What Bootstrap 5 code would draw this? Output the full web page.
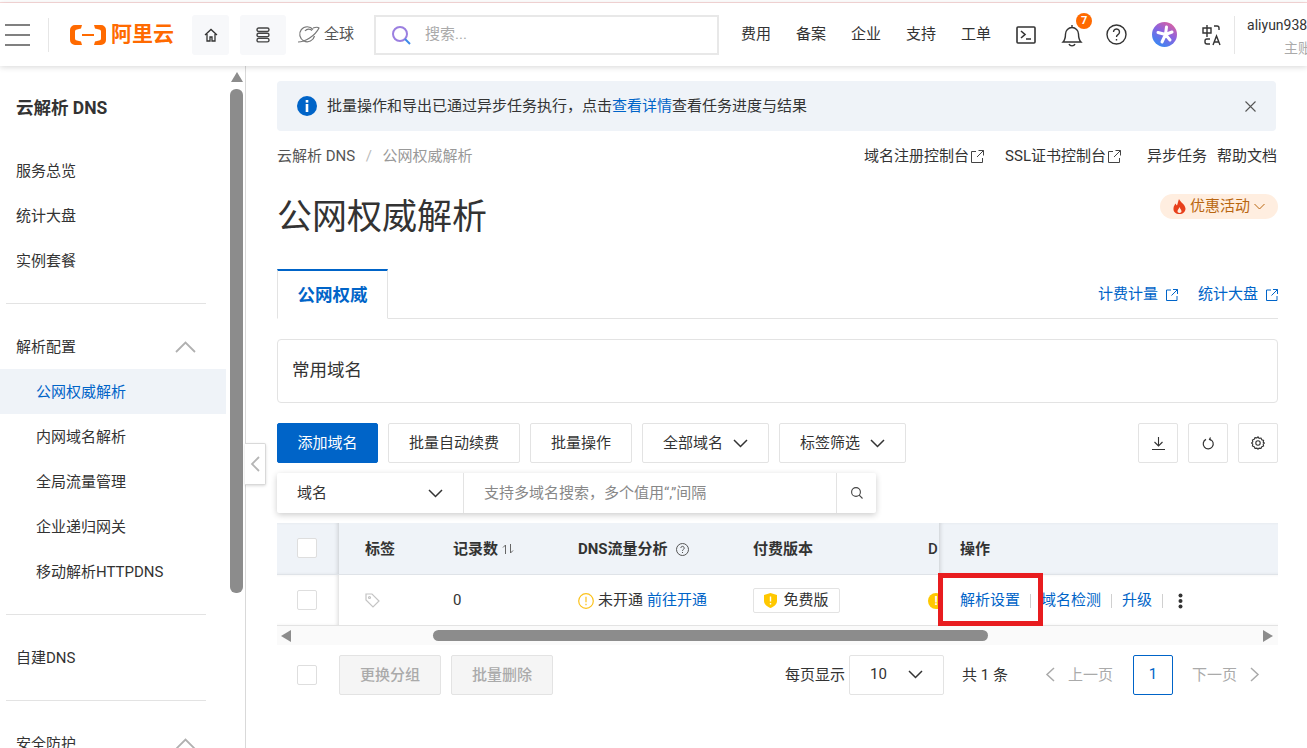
<!DOCTYPE html>
<html lang="zh-CN">
<head>
    <meta charset="UTF-8">
    <title>公网权威解析</title>
    <link href="https://cdn.jsdelivr.net/npm/bootstrap@5.3.0/dist/css/bootstrap.min.css" rel="stylesheet">
    <style>
        html, body { height: 748px; overflow: hidden; }
        body { font-family: Roboto, "Noto Sans CJK SC", sans-serif; font-size: 15px; color: #333; background: #fff; }
        svg { display: block; flex: none; }
        a { text-decoration: none; color: #0064c8; }

        .top-line { height: 3px; background: #fff; border-bottom: 1px solid #fbdcdc; }
        .top-bar { height: 63px; background: #fff; box-shadow: 0 1px 6px rgba(0,0,0,.16); position: relative; z-index: 5; overflow: hidden; white-space: nowrap; }
        .top-bar > * { flex: none; }
        .menu-btn { width: 44px; height: 34px; margin-left: 5px; border-right: 1px solid #e6e6e6; }
        .logo { margin-left: 21px; width: 103px; color: #ff6a00; font-size: 21px; font-weight: 700; line-height: 1; gap: 5px; }
        .square-btn { height: 40px; background: #f7f8fa; border-radius: 3px; }
        .search-box { width: 345px; height: 40px; margin-left: 20px; border: 2px solid #e8e8e8; padding-left: 15px; gap: 14px; color: #aaa; }
        .top-nav { margin-left: 22px; gap: 25px; }
        .bell-wrap { margin-right: -2px; }
        .user-box { margin-left: 12px; padding-left: 12px; height: 38px; width: 73px; border-left: 1px solid #e6e6e6; font-size: 14px; line-height: 20px; }
        .user-name { margin-top: -1px; }
        .user-sub { color: #aaa; margin-left: 37px; margin-top: 3px; }
        .bell-badge { position: absolute; top: -10px; right: -9px; width: 16px; height: 16px; border-radius: 50%; background: #ff6a00; color: #fff; font-size: 11px; font-weight: 700; line-height: 16px; text-align: center; }

        .page-body { height: 682px; position: relative; }
        .side-wrap { width: 246px; flex: none; border-right: 1px solid #d9d9d9; position: relative; overflow: hidden; }
        .side-menu { width: 226px; }
        .side-title { height: 82px; padding: 22px 0 0 16px; font-size: 17.500px; font-weight: 700; line-height: 41px; }
        .side-item { height: 45px; line-height: 47px; padding-left: 16px; padding-right: 30px; color: #333; }
        .side-item > span { padding-top: 2px; }
        .side-item.sub { padding-left: 36px; }
        .side-item.active { background: #eff3f8; color: #0064c8; }
        .side-line { margin: 20px 0 20px 6px; width: 200px; border-top: 1px solid #e3e3e3; height: 0; }
        .side-scroll { position: absolute; left: 229px; top: 0; width: 15px; height: 100%; }
        .scroll-up { width: 0; height: 0; margin: 6px auto 0; border: 6px solid transparent; border-top: 0; border-bottom: 10px solid #8c8c8c; }
        .scroll-thumb { width: 13px; height: 504px; margin: 7px auto 0; background: #8c8c8c; border-radius: 6px; }
        .fold-btn { position: absolute; left: 245px; top: 377px; width: 21px; height: 42px; background: #fff; border: 1px solid #d9d9d9; border-left: 0; border-radius: 0 2px 2px 0; box-shadow: 0 1px 3px rgba(0,0,0,.15); z-index: 3; }

        .main-pane { padding: 15px 29px 0 31px; overflow: hidden; position: relative; }
        .info-bar { height: 50px; background: #eff3f8; border-radius: 4px; margin: 0 2px 0 0; padding: 0 20px; border: 0; color: #333; }
        .crumb-row { height: 50px; }
        .crumb-row .breadcrumb { margin: 0; --bs-breadcrumb-item-padding-x: 10.500px; --bs-breadcrumb-divider-color: #bbb; --bs-breadcrumb-item-active-color: #999; }
        .crumb-row .breadcrumb a { color: #555; }
        .head-links { padding-right: 1px; }
        .head-links a { color: #333; }
        .title-row { height: 88px; }
        .page-title { font-size: 35px; font-weight: 400; color: #333; margin: 0; line-height: 1; padding-top: 19px; }
        .promo { height: 25px; width: 118px; margin-top: 13px; border-radius: 13px; background: #ffeee0; color: #b9660f; font-size: 15px; }
        .tab-row { height: 50px; border-bottom: 1px solid #e3e3e3; }
        .tab-cur { width: 111px; height: 50px; padding-top: 3px; border: 1px solid #e3e3e3; border-top: 2px solid #0064c8; border-bottom: 1px solid #fff; background: #fff; color: #0064c8; font-weight: 700; font-size: 17.500px; }
        .tab-links { gap: 20px; padding-top: 2px; }
        .fav-card { height: 64px; margin-top: 20px; border: 1px solid #e3e3e3; border-radius: 4px; padding: 0 0 2px 14px; font-size: 17.500px; }
        .tool-row { margin-top: 20px; height: 40px; gap: 10px; }
        .tool-btn { height: 40px; background: #fff; border: 1px solid #e3e3e3; border-radius: 2px; color: #333; font-size: 15px; padding: 0; }
        .btn-add { width: 101px; background: #0064c8; border-color: #0064c8; color: #fff; }
        .btn-drop { width: 127px; gap: 10px; }
        .btn-icon { width: 40px; }
        .search-row { width: 599px; height: 40px; margin-top: 10px; background: #fff; box-shadow: 0 2px 6px rgba(0,0,0,.2); border-radius: 2px; }
        .search-type { width: 187px; flex: none; padding: 0 20px; border-right: 1px solid #e3e3e3; }
        .search-input { width: 0; border: 0; padding: 0 20px; font-size: 15px; color: #888; border-radius: 0; }
        .search-input::placeholder { color: #888; }
        .search-go { width: 40px; flex: none; border-left: 1px solid #e3e3e3; }

        .table-wrap { margin-top: 10px; position: relative; }
        .dns-table { table-layout: fixed; width: 1001px; margin: 0; --bs-table-color: #333; }
        .dns-table th { height: 51px; background: #eff3f8; font-weight: 700; vertical-align: middle; border-bottom: 1px solid #dfe3e8; white-space: nowrap; overflow: hidden; padding: 2px 0 0 26px; }
        .dns-table td { height: 51px; vertical-align: middle; border-bottom: 1px solid #e3e3e3; white-space: nowrap; overflow: hidden; padding: 2px 0 0 26px; font-weight: 400; }
        .dns-table .col-check { padding: 0 0 0 20px; box-shadow: inset -3px 0 4px -2px rgba(0,0,0,.16); }
        .dns-table .col-op { padding-left: 21px; box-shadow: inset 3px 0 4px -2px rgba(0,0,0,.16); }
        .dns-table .col-cut { font-weight: 500; }
        .fake-check { width: 20px; height: 20px; background: #fff; border: 1px solid #dedede; border-radius: 2px; }
        .ver-tag { height: 25px; width: 87px; border: 1px solid #e3e3e3; border-radius: 2px; gap: 6px; }
        .op-sep { width: 1px; height: 14px; background: #d0d0d0; margin: 0 10px; }
        .warn-dot { width: 16px; height: 16px; border-radius: 50%; background: #ffc800; color: #fff; font-size: 12px; line-height: 16px; text-align: center; font-weight: 700; }
        .op-more { margin-left: 5px; }
        .red-mark { position: absolute; left: 661px; top: 50px; width: 105px; height: 53px; border: 5px solid #e81c1f; z-index: 2; }
        .h-scroll { height: 19px; background: #fafafa; position: relative; }
        .h-thumb { position: absolute; left: 156px; top: 4px; width: 555px; height: 11px; background: #8c8c8c; border-radius: 6px; }
        .arrow-left, .arrow-right { position: absolute; top: 4px; width: 0; height: 0; border: 6px solid transparent; }
        .arrow-left { left: 0; margin-left: 4px; border-left: 0; border-right: 10px solid #8c8c8c; }
        .arrow-right { right: 5px; border-right: 0; border-left: 10px solid #8c8c8c; }

        .foot-row { height: 40px; margin-top: 10px; padding-left: 20px; }
        .foot-row > span { padding-top: 2px; }
        .btn.foot-btn:disabled { width: 102px; height: 40px; background: #f5f5f5; border: 1px solid #e3e3e3; border-radius: 2px; color: #aaa; font-size: 15px; font-weight: 500; padding: 2px 0 0; opacity: 1; }
        .size-select { width: 95px; height: 40px; border: 1px solid #e3e3e3; border-radius: 2px; padding: 0 20px; }
        .page-num { width: 40px; height: 40px; border: 1px solid #0064c8; border-radius: 2px; color: #0064c8; }
        .page-off { color: #aaa; }
    </style>
</head>
<body>
    <div class="top-line"></div>
    <div class="top-bar d-flex align-items-center">
        <div class="menu-btn d-flex align-items-center">
            <svg width="26" height="22" viewBox="0 0 26 22"><path d="M0 1h25M0 11h25M0 21h25" stroke="#808080" stroke-width="2"/></svg>
        </div>
        <div class="logo d-flex align-items-center">
            <svg width="36" height="20" viewBox="0 0 36 20" fill="#ff6a00"><path d="M12 0H5a5 5 0 0 0-5 5v10a5 5 0 0 0 5 5h7l-1-3.500-4-1a2 2 0 0 1-2-2V6.500a2 2 0 0 1 2-2l4-1zM24 0h7a5 5 0 0 1 5 5v10a5 5 0 0 1-5 5h-7l1-3.500 4-1a2 2 0 0 0 2-2V6.500a2 2 0 0 0-2-2l-4-1zM12 9h12v2H12z"/></svg>
            <span>阿里云</span>
        </div>
        <div class="square-btn d-flex align-items-center justify-content-center" style="width:37px;margin-left:19px">
            <svg width="14" height="14" viewBox="0 0 14 14" fill="none" stroke="#333" stroke-width="1.300"><path d="M1 7l6-5.500L13 7M3 6v7h3V9h2v4h3V6"/></svg>
        </div>
        <div class="square-btn d-flex align-items-center justify-content-center" style="width:46px;margin-left:11px">
            <svg width="14" height="16" viewBox="0 0 14 16" fill="none" stroke="#444" stroke-width="1.400"><rect x="1" y="1" width="12" height="3.500" rx="1.700"/><rect x="1" y="6.200" width="12" height="3.500" rx="1.700"/><rect x="1" y="11.400" width="12" height="3.500" rx="1.700"/></svg>
        </div>
        <div class="d-flex align-items-center" style="margin-left:11px;gap:4px;color:#555">
            <svg width="23" height="20" viewBox="0 0 23 20" fill="none" stroke="#777" stroke-width="1.200"><path d="M16 4.500A7.500 7.500 0 1 0 17.500 11M1 17c7 0 17-6 21-14-1-1-3-1-6 0M8 6c2-2.500 5-2.500 7-.5"/></svg>
            <span>全球</span>
        </div>
        <div class="search-box d-flex align-items-center">
            <svg width="20" height="20" viewBox="0 0 20 20" fill="none" stroke-width="2"><circle cx="9" cy="9" r="7" stroke="#9b7fe0"/><path d="M14 14l5 5" stroke="#3d8be8"/></svg>
            <span>搜索...</span>
        </div>
        <div class="top-nav d-flex align-items-center">
            <span>费用</span><span>备案</span><span>企业</span><span>支持</span><span>工单</span>
            <svg width="20" height="18" viewBox="0 0 20 18" fill="none" stroke="#333" stroke-width="1.600"><rect x="1" y="1" width="18" height="16" rx="1"/><path d="M5 5l4 3.500L5 12M10 13h5"/></svg>
            <div class="position-relative bell-wrap">
                <svg width="22" height="24" viewBox="0 0 22 24" fill="none" stroke="#333" stroke-width="1.400"><path d="M2 19c2-2 2.500-4 2.500-8a6.500 6.500 0 0 1 13 0c0 4 .5 6 2.500 8zM8 21c1 2.500 5 2.500 6 0M11 4V2"/></svg>
                <span class="bell-badge">7</span>
            </div>
            <svg width="21" height="21" viewBox="0 0 21 21" fill="none" stroke="#333" stroke-width="1.400"><circle cx="10.500" cy="10.500" r="9.500"/><path d="M7.500 8a3 3 0 1 1 4.500 2.600c-1 .6-1.500 1.200-1.500 2.400M10.500 15v1.500"/></svg>
            <svg width="25" height="25" viewBox="0 0 25 25"><defs><linearGradient id="star" x1=".8" y1="0" x2=".2" y2="1"><stop offset="0" stop-color="#e0609c"/><stop offset=".45" stop-color="#8a63e0"/><stop offset="1" stop-color="#2f8cf5"/></linearGradient></defs><circle cx="12.500" cy="12.500" r="12.500" fill="url(#star)"/><path d="M13.500 12.500L14.500 5M13.500 12.500L20 10M13.500 12.500L18 18M13.500 12.500L10 20M13.500 12.500L6 10.500" stroke="#fff" stroke-width="3" stroke-linecap="round"/></svg>
            <svg width="20" height="22" viewBox="0 0 20 22" fill="none" stroke="#333" stroke-width="1.400"><path d="M1 4h8v5H1zM5 1v12M12 2h3a2 2 0 0 1 2 2v2M8 15H5a2 2 0 0 0-2 2v1a2 2 0 0 0 2 2h3M11 21l3.500-9 3.500 9M12 18h5"/></svg>
        </div>
        <div class="user-box">
            <div class="user-name">aliyun9388</div>
            <div class="user-sub">主账号</div>
        </div>
    </div>

    <div class="page-body d-flex">
        <div class="side-wrap">
            <div class="side-menu">
                <div class="side-title">云解析 DNS</div>
                <div class="side-item">服务总览</div>
                <div class="side-item">统计大盘</div>
                <div class="side-item">实例套餐</div>
                <div class="side-line"></div>
                <div class="side-item d-flex align-items-center justify-content-between">
                    <span>解析配置</span>
                    <svg width="21" height="12" viewBox="0 0 21 12" fill="none" stroke="#b0b0b0" stroke-width="1.800"><path d="M1 11l9.500-9.500L20 11"/></svg>
                </div>
                <div class="side-item sub active">公网权威解析</div>
                <div class="side-item sub">内网域名解析</div>
                <div class="side-item sub">全局流量管理</div>
                <div class="side-item sub">企业递归网关</div>
                <div class="side-item sub">移动解析HTTPDNS</div>
                <div class="side-line"></div>
                <div class="side-item">自建DNS</div>
                <div class="side-line"></div>
                <div class="side-item d-flex align-items-center justify-content-between">
                    <span>安全防护</span>
                    <svg width="21" height="12" viewBox="0 0 21 12" fill="none" stroke="#b0b0b0" stroke-width="1.800"><path d="M1 11l9.500-9.500L20 11"/></svg>
                </div>
            </div>
            <div class="side-scroll">
                <div class="scroll-up"></div>
                <div class="scroll-thumb"></div>
            </div>
        </div>
        <div class="fold-btn d-flex align-items-center justify-content-center">
            <svg width="10" height="16" viewBox="0 0 10 16" fill="none" stroke="#b5b5b5" stroke-width="1.800"><path d="M9 1L2 8l7 7"/></svg>
        </div>

        <div class="main-pane flex-grow-1">
            <div class="alert info-bar d-flex align-items-center" role="alert">
                <svg width="20" height="20" viewBox="0 0 20 20"><circle cx="10" cy="10" r="10" fill="#0064c8"/><rect x="8.700" y="8" width="2.600" height="8" fill="#fff"/><rect x="8.700" y="4" width="2.600" height="2.600" fill="#fff"/></svg>
                <span class="flex-grow-1" style="margin-left:10px">批量操作和导出已通过异步任务执行，点击<a href="#">查看详情</a>查看任务进度与结果</span>
                <svg width="11" height="11" viewBox="0 0 11 11" fill="none" stroke="#555" stroke-width="1.100"><path d="M.5.500l10 10M10.500.500l-10 10"/></svg>
            </div>
            <div class="crumb-row d-flex align-items-center justify-content-between">
                <nav aria-label="breadcrumb">
                    <ol class="breadcrumb">
                        <li class="breadcrumb-item"><a href="#">云解析 DNS</a></li>
                        <li class="breadcrumb-item active">公网权威解析</li>
                    </ol>
                </nav>
                <div class="head-links d-flex align-items-center">
                    <a href="#" class="d-flex align-items-center">域名注册控制台<svg style="margin-left:2px" width="13" height="13" viewBox="0 0 13 13" fill="none" stroke="#444"><path d="M5 1.500H.5v11H11.500V8M7.500.5h5V5.500M12.500.500L6 7"/></svg></a>
                    <a href="#" class="d-flex align-items-center" style="margin-left:21px">SSL证书控制台<svg style="margin-left:2px" width="13" height="13" viewBox="0 0 13 13" fill="none" stroke="#444"><path d="M5 1.500H.5v11H11.500V8M7.500.5h5V5.500M12.500.500L6 7"/></svg></a>
                    <a href="#" style="margin-left:26px">异步任务</a>
                    <a href="#" style="margin-left:10px">帮助文档</a>
                </div>
            </div>
            <div class="title-row d-flex justify-content-between align-items-start">
                <h1 class="page-title">公网权威解析</h1>
                <div class="promo d-flex align-items-center justify-content-center gap-1">
                    <svg width="13" height="15" viewBox="0 0 13 15" fill="#e8401c"><path d="M6 0c1 3 6 5 6.500 9.500C12.500 13 10 15 6.500 15S0 13 .5 9c.2-2 1.500-3.500 2-4.500.5 1 1 1.500 1.500 2C4.800 4.500 5 2.500 6 0zM6.500 8C6 10 4.500 10.500 4.500 12.300c0 1 .8 1.700 2 1.700s2-.7 2-1.700C8.500 10.500 7 10 6.500 8z"/></svg>
                    <span>优惠活动</span>
                    <svg width="11" height="7" viewBox="0 0 11 7" fill="none" stroke="#b9660f"><path d="M.5 1l5 5 5-5"/></svg>
                </div>
            </div>
            <div class="tab-row d-flex justify-content-between align-items-center">
                <div class="tab-cur d-flex align-items-center justify-content-center">公网权威</div>
                <div class="tab-links d-flex align-items-center">
                    <a href="#" class="d-flex align-items-center">计费计量<svg class="ms-2" width="12" height="12" viewBox="0 0 12 12" fill="none" stroke="#0064c8"><path d="M5 1H.5v10.500H11V7M7 .5h4.500V5M11.500.500L5.500 6.500"/></svg></a>
                    <a href="#" class="d-flex align-items-center">统计大盘<svg class="ms-2" width="12" height="12" viewBox="0 0 12 12" fill="none" stroke="#0064c8"><path d="M5 1H.5v10.500H11V7M7 .5h4.500V5M11.500.500L5.500 6.500"/></svg></a>
                </div>
            </div>
            <div class="fav-card d-flex align-items-center">常用域名</div>
            <div class="tool-row d-flex">
                <button class="btn tool-btn btn-add">添加域名</button>
                <button class="btn tool-btn" style="width:132px">批量自动续费</button>
                <button class="btn tool-btn" style="width:102px">批量操作</button>
                <button class="btn tool-btn btn-drop d-flex align-items-center justify-content-center">全部域名<svg width="15" height="9" viewBox="0 0 15 9" fill="none" stroke="#333" stroke-width="1.500"><path d="M1 1l6.500 6.500L14 1"/></svg></button>
                <button class="btn tool-btn btn-drop d-flex align-items-center justify-content-center">标签筛选<svg width="15" height="9" viewBox="0 0 15 9" fill="none" stroke="#333" stroke-width="1.500"><path d="M1 1l6.500 6.500L14 1"/></svg></button>
                <button class="btn tool-btn btn-icon d-flex align-items-center justify-content-center ms-auto"><svg width="13" height="13" viewBox="0 0 13 13" fill="none" stroke="#333" stroke-width="1.100"><path d="M6.500 0v9M2.500 5l4 4 4-4M0 12.500h13"/></svg></button>
                <button class="btn tool-btn btn-icon d-flex align-items-center justify-content-center"><svg width="13" height="13" viewBox="0 0 13 13" fill="none" stroke="#333" stroke-width="1.200"><path d="M8 2.200A5 5 0 1 1 4 2.400M8.500 .5L7.500 2.500l2 1"/></svg></button>
                <button class="btn tool-btn btn-icon d-flex align-items-center justify-content-center"><svg width="14" height="14" viewBox="0 0 14 14" fill="none" stroke="#333" stroke-width="1.100"><path d="M7 .8l1.100 1.500 1.900-.3.800 1.700 1.800.7-.4 1.900L13.500 7l-1.300 1.100.4 1.900-1.800.7-.8 1.700-1.900-.3L7 13.200l-1.100-1.100-1.900.3-.8-1.700-1.800-.7.4-1.900L.5 7l1.300-1.100-.4-1.900 1.800-.7.8-1.700 1.900.3z"/><circle cx="7" cy="7" r="2.200"/></svg></button>
            </div>
            <div class="search-row d-flex">
                <div class="search-type d-flex align-items-center justify-content-between">
                    <span>域名</span>
                    <svg width="15" height="9" viewBox="0 0 15 9" fill="none" stroke="#333" stroke-width="1.500"><path d="M1 1l6.500 6.500L14 1"/></svg>
                </div>
                <input class="form-control search-input flex-grow-1" placeholder="支持多域名搜索，多个值用“,”间隔">
                <div class="search-go d-flex align-items-center justify-content-center">
                    <svg width="12" height="12" viewBox="0 0 12 12" fill="none" stroke="#444" stroke-width="1.100"><circle cx="5" cy="5" r="4.400"/><path d="M8.200 8.200L11.500 11.500"/></svg>
                </div>
            </div>

            <div class="table-wrap">
                <table class="table dns-table">
                    <colgroup>
                        <col style="width:62px"><col style="width:88px"><col style="width:125px"><col style="width:175px"><col style="width:175px"><col style="width:37px"><col style="width:339px">
                    </colgroup>
                    <thead>
                        <tr>
                            <th class="col-check"><div class="fake-check"></div></th>
                            <th>标签</th>
                            <th><div class="d-flex align-items-center gap-1">记录数<svg width="12" height="12" viewBox="0 0 12 12" fill="none" stroke="#666"><path d="M3.500 11V2L1 4.500M8.500 1v9L11 7.500"/></svg></div></th>
                            <th><div class="d-flex align-items-center gap-1">DNS流量分析<svg class="ms-1" width="13" height="13" viewBox="0 0 13 13" fill="none" stroke="#555"><circle cx="6.500" cy="6.500" r="6"/><path d="M4.800 5a1.700 1.700 0 1 1 2.600 1.500c-.6.400-.9.700-.9 1.400M6.500 9v1"/></svg></div></th>
                            <th>付费版本</th>
                            <th class="col-cut">D</th>
                            <th class="col-op">操作</th>
                        </tr>
                    </thead>
                    <tbody>
                        <tr>
                            <td class="col-check"><div class="fake-check"></div></td>
                            <td><svg width="15" height="15" viewBox="0 0 15 15" fill="none" stroke="#c4c4c4" stroke-width="1.200"><path d="M1 1h6l7 7-6 6-7-7z"/><circle cx="4.500" cy="4.500" r="1"/></svg></td>
                            <td>0</td>
                            <td><div class="d-flex align-items-center">
                                <svg width="16" height="16" viewBox="0 0 16 16" fill="none" stroke="#fcc21b" stroke-width="1.200"><circle cx="8" cy="8" r="7.300"/><path d="M8 3.800v5.400M8 10.800v1.400"/></svg>
                                <span class="ms-1">未开通</span><a href="#" class="ms-1">前往开通</a>
                            </div></td>
                            <td><div class="ver-tag d-flex align-items-center justify-content-center">
                                <svg width="13" height="15" viewBox="0 0 13 15"><path d="M6.500 0l6.500 2v6c0 3.500-3 5.500-6.500 7C3 13.500 0 11.500 0 8V2z" fill="#ffc800"/><path d="M6.500 3.500v5M6.500 10v1.500" stroke="#fff" stroke-width="1.400"/></svg>
                                <span>免费版</span>
                            </div></td>
                            <td><div class="warn-dot">!</div></td>
                            <td class="col-op"><div class="d-flex align-items-center">
                                <a href="#">解析设置</a><span class="op-sep"></span><a href="#">域名检测</a><span class="op-sep"></span><a href="#">升级</a><span class="op-sep"></span>
                                <svg class="op-more" width="5" height="16" viewBox="0 0 5 16" fill="#333"><circle cx="2.500" cy="2.500" r="2"/><circle cx="2.500" cy="8" r="2"/><circle cx="2.500" cy="13.500" r="2"/></svg>
                            </div></td>
                        </tr>
                    </tbody>
                </table>
                <div class="red-mark"></div>
                <div class="h-scroll">
                    <div class="arrow-left"></div>
                    <div class="h-thumb"></div>
                    <div class="arrow-right"></div>
                </div>
            </div>

            <div class="foot-row d-flex align-items-center">
                <div class="fake-check"></div>
                <button class="btn foot-btn" style="margin-left:22px" disabled>更换分组</button>
                <button class="btn foot-btn" style="margin-left:10px" disabled>批量删除</button>
                <span class="ms-auto">每页显示</span>
                <div class="size-select d-flex align-items-center justify-content-between" style="margin-left:4px">
                    <span>10</span>
                    <svg width="15" height="9" viewBox="0 0 15 9" fill="none" stroke="#333" stroke-width="1.500"><path d="M1 1l6.500 6.500L14 1"/></svg>
                </div>
                <span style="margin-left:18px">共 1 条</span>
                <svg style="margin-left:37px" width="10" height="15" viewBox="0 0 10 15" fill="none" stroke="#aaa" stroke-width="1.500"><path d="M9 1L2 7.500 9 14"/></svg>
                <span class="page-off" style="margin-left:13px">上一页</span>
                <div class="page-num d-flex align-items-center justify-content-center" style="margin-left:20px">1</div>
                <span class="page-off" style="margin-left:19px">下一页</span>
                <svg style="margin-left:13px;margin-right:18px" width="10" height="15" viewBox="0 0 10 15" fill="none" stroke="#aaa" stroke-width="1.500"><path d="M1 1l7 6.500L1 14"/></svg>
            </div>
        </div>
    </div>

    <script src="https://cdn.jsdelivr.net/npm/bootstrap@5.3.0/dist/js/bootstrap.bundle.min.js"></script>
</body>
</html>
